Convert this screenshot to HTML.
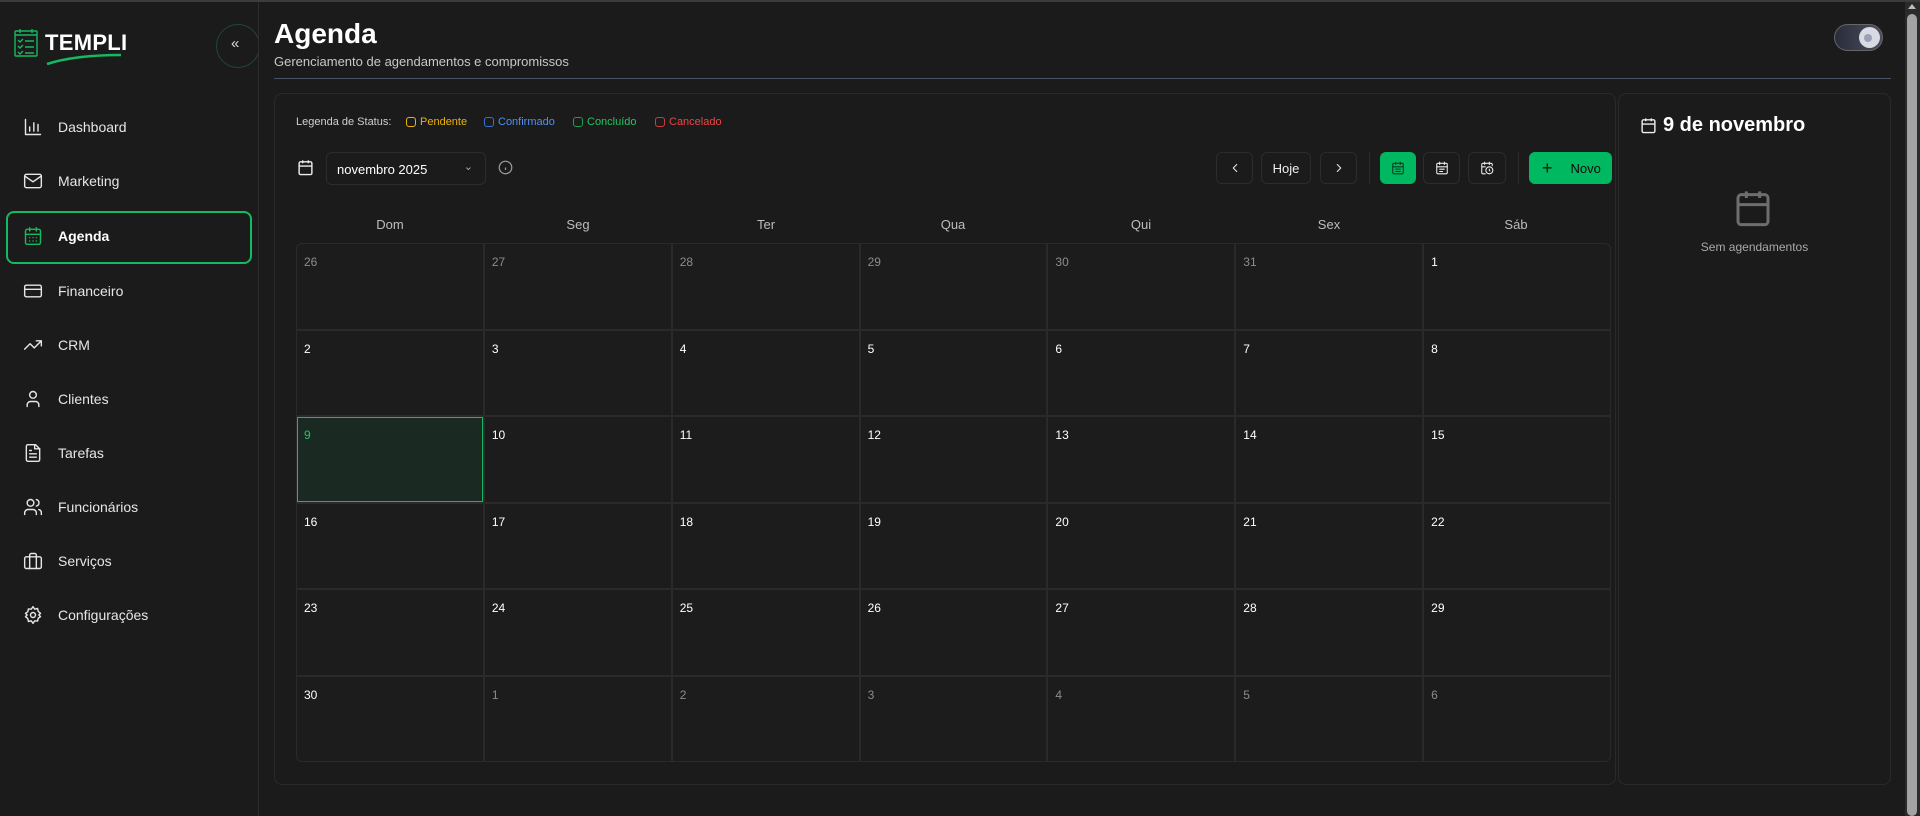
<!DOCTYPE html>
<html><head><meta charset="utf-8"><style>
*{box-sizing:border-box;margin:0;padding:0}
body{width:1920px;height:816px;background:#1b1b1b;font-family:"Liberation Sans",sans-serif;color:#e8e8e8;position:relative;overflow:hidden}
.abs{position:absolute}
.topbar{left:0;top:0;width:1920px;height:2px;background:#3c3c3c}
.side{left:0;top:2px;width:259px;height:814px;border-right:1px solid #2c2c2c;background:#1b1b1b;overflow:hidden}
.nav{position:absolute;left:23px;height:20px;display:flex;align-items:center;font-size:14px;color:#e6e6e6}
.nav svg{width:20px;height:20px;margin-right:15px;fill:none;stroke:#e6e6e6;stroke-width:1.7;stroke-linecap:round;stroke-linejoin:round}
.card{border:1px solid #2a2a2a;border-radius:8px}
.btn{position:absolute;top:152px;height:32px;border:1px solid #2c2c2c;border-radius:6px;display:flex;align-items:center;justify-content:center;font-size:13px;color:#eee;background:#1b1b1b}
.btn svg{width:14px;height:14px;fill:none;stroke:#eee;stroke-width:1.8;stroke-linecap:round;stroke-linejoin:round}
.wd{position:absolute;top:217px;width:188px;text-align:center;font-size:13px;color:#bdbdbd}
.leg{position:absolute;top:116px;display:inline-flex;align-items:center;font-size:11px}
.leg i{display:inline-block;width:10px;height:10px;border:1.5px solid;border-radius:3px;margin-right:4px}
.c{background:#1c1c1c;font-size:12px;padding:11px 0 0 7px;color:#fff}.c.o{color:#8c8c8c}.c.t{background:#1a2a22;outline:1px solid #17b862;outline-offset:-1px;color:#22c55e}
</style></head><body>
<div class="abs topbar"></div>
<div class="abs side">
  <svg class="abs" style="left:14px;top:26px" width="26" height="30" viewBox="0 0 26 30" fill="none" stroke="#17b862" stroke-width="1.4"><rect x="1" y="3" width="22" height="25" rx="1"/><path d="M1 7h22M6 1v4M18 1v4M4 12l2 2 3-3M11 13h9M4 18l2 2 3-3M11 19h9M4 24l2 2 3-3M11 25h9"/></svg>
  <div class="abs" style="left:45px;top:28px;font-size:22px;font-weight:bold;color:#fff;letter-spacing:0.3px">TEMPLI</div>
  <svg class="abs" style="left:45px;top:50px" width="78" height="14"><path d="M2 12 Q30 3 76 3" stroke="#17b862" stroke-width="2.5" fill="none"/></svg>
  <div class="abs" style="left:216px;top:22px;width:44px;height:44px;border:1px solid #1f4a32;border-radius:50%"></div>
  <div class="abs" style="left:231px;top:33px;font-size:15px;color:#ddd">«</div>
  <div class="abs" style="left:6px;top:209px;width:246px;height:53px;border:2px solid #17b862;border-radius:8px"></div>
  <div class="nav" style="top:115px"><svg viewBox="0 0 24 24"><path d="M3 3v18h18M8 17v-5M13 17V7M18 17v-8"/></svg>Dashboard</div>
  <div class="nav" style="top:169px"><svg viewBox="0 0 24 24"><rect x="2" y="4" width="20" height="16" rx="2"/><path d="M2 6l10 7 10-7"/></svg>Marketing</div>
  <div class="nav" style="top:224px;font-weight:bold;color:#fff"><svg viewBox="0 0 24 24" style="stroke:#17b862"><rect x="3" y="4" width="18" height="18" rx="2"/><path d="M3 10h18M8 2v4M16 2v4M8 14h.01M12 14h.01M16 14h.01M8 18h.01M12 18h.01M16 18h.01"/></svg>Agenda</div>
  <div class="nav" style="top:279px"><svg viewBox="0 0 24 24"><rect x="2" y="5" width="20" height="14" rx="2"/><path d="M2 10h20"/></svg>Financeiro</div>
  <div class="nav" style="top:333px"><svg viewBox="0 0 24 24"><path d="M22 7l-8.5 8.5-5-5L2 17M16 7h6v6"/></svg>CRM</div>
  <div class="nav" style="top:387px"><svg viewBox="0 0 24 24"><circle cx="12" cy="7" r="4"/><path d="M19 21v-2a4 4 0 0 0-4-4H9a4 4 0 0 0-4 4v2"/></svg>Clientes</div>
  <div class="nav" style="top:441px"><svg viewBox="0 0 24 24"><path d="M15 2H6a2 2 0 0 0-2 2v16a2 2 0 0 0 2 2h12a2 2 0 0 0 2-2V7z"/><path d="M14 2v5h6M8 13h8M8 17h8M8 9h2"/></svg>Tarefas</div>
  <div class="nav" style="top:495px"><svg viewBox="0 0 24 24"><circle cx="9" cy="7" r="4"/><path d="M16 21v-2a4 4 0 0 0-4-4H6a4 4 0 0 0-4 4v2M16 3.1a4 4 0 0 1 0 7.8M22 21v-2a4 4 0 0 0-3-3.9"/></svg>Funcionários</div>
  <div class="nav" style="top:549px"><svg viewBox="0 0 24 24"><rect x="2" y="7" width="20" height="14" rx="2"/><path d="M16 21V5a2 2 0 0 0-2-2h-4a2 2 0 0 0-2 2v16"/></svg>Serviços</div>
  <div class="nav" style="top:603px"><svg viewBox="0 0 24 24"><circle cx="12" cy="12" r="3"/><path d="M12 2l2 3 3.5-.8.8 3.5L21 10l-2 2 2 2-2.7 1.8-.8 3.5L14 19l-2 3-2-3-3.5.8-.8-3.5L3 14l2-2-2-2 2.7-1.8.8-3.5L10 5z"/></svg>Configurações</div>
</div>

<div class="abs" style="left:274px;top:18px;font-size:28px;font-weight:bold;color:#fff">Agenda</div>
<div class="abs" style="left:274px;top:54px;font-size:13px;color:#c8c8c8">Gerenciamento de agendamentos e compromissos</div>
<div class="abs" style="left:274px;top:78px;width:1617px;height:1px;background:#4a5265"></div>
<div class="abs" style="left:1834px;top:24px;width:49px;height:27px;border-radius:14px;background:linear-gradient(90deg,#2a2d3a,#4a4e5e);border:1px solid #666"></div>
<div class="abs" style="left:1859px;top:27px;width:21px;height:21px;border-radius:50%;background:#d8dbe3"></div>
<div class="abs" style="left:1864px;top:34px;width:8px;height:8px;border-radius:50%;background:#9aa0b5"></div>

<div class="abs card" style="left:274px;top:93px;width:1342px;height:692px"></div>
<div class="abs card" style="left:1618px;top:93px;width:273px;height:692px"></div>

<div class="leg" style="left:296px;color:#cfcfcf">Legenda de Status:</div>
<div class="leg" style="left:406px;color:#eab308"><i></i>Pendente</div>
<div class="leg" style="left:484px;color:#4f8ff7"><i style="border-color:#3b6fd0"></i>Confirmado</div>
<div class="leg" style="left:573px;color:#22c55e"><i style="border-color:#1f9d4e"></i>Concluído</div>
<div class="leg" style="left:655px;color:#ef4444"><i style="border-color:#d03a3a"></i>Cancelado</div>

<svg class="abs" style="left:297px;top:159px" width="17" height="17" viewBox="0 0 24 24" fill="none" stroke="#eee" stroke-width="2"><rect x="3" y="4" width="18" height="18" rx="2"/><path d="M3 10h18M8 2v4M16 2v4"/></svg>
<div class="abs" style="left:326px;top:152px;width:160px;height:33px;border:1px solid #2c2c2c;border-radius:6px;font-size:13px;padding:9px 0 0 10px;color:#fff">novembro 2025<span style="position:absolute;right:12px;top:7px;color:#aaa;font-size:11px">⌄</span></div>
<svg class="abs" style="left:498px;top:160px" width="15" height="15" viewBox="0 0 24 24" fill="none" stroke="#999" stroke-width="2"><circle cx="12" cy="12" r="10"/><path d="M12 16v-4M12 8h.01"/></svg>

<div class="btn" style="left:1216px;width:37px"><svg viewBox="0 0 24 24"><path d="M15 18l-6-6 6-6"/></svg></div>
<div class="btn" style="left:1261px;width:50px">Hoje</div>
<div class="btn" style="left:1320px;width:37px"><svg viewBox="0 0 24 24"><path d="M9 18l6-6-6-6"/></svg></div>
<div class="abs" style="left:1369px;top:152px;width:1px;height:32px;background:#2c2c2c"></div>
<div class="btn" style="left:1380px;width:36px;background:#00b85f;border-color:#00b85f"><svg viewBox="0 0 24 24" style="stroke:#0b3b22"><rect x="3" y="4" width="18" height="18" rx="2"/><path d="M3 10h18M8 2v4M16 2v4M8 14h8M8 18h8"/></svg></div>
<div class="btn" style="left:1423px;width:37px"><svg viewBox="0 0 24 24"><rect x="3" y="4" width="18" height="18" rx="2"/><path d="M3 10h18M8 2v4M16 2v4M8 14h8M8 18h5"/></svg></div>
<div class="btn" style="left:1468px;width:38px"><svg viewBox="0 0 24 24"><path d="M21 8V6a2 2 0 0 0-2-2H5a2 2 0 0 0-2 2v14a2 2 0 0 0 2 2h4M3 10h6M8 2v4M16 2v4"/><circle cx="16" cy="16" r="6"/><path d="M16 14v2l1 1"/></svg></div>
<div class="abs" style="left:1518px;top:152px;width:1px;height:32px;background:#2c2c2c"></div>
<div class="btn" style="left:1529px;width:83px;background:#00b85f;border-color:#00b85f;justify-content:flex-start;padding-left:12px"><span style="font-size:18px;color:#0a1a10;margin-right:18px">+</span><span style="color:#0a0a0a">Novo</span></div>

<div class="wd" style="left:296px">Dom</div><div class="wd" style="left:484px">Seg</div><div class="wd" style="left:672px">Ter</div><div class="wd" style="left:859px">Qua</div><div class="wd" style="left:1047px">Qui</div><div class="wd" style="left:1235px">Sex</div><div class="wd" style="left:1422px">Sáb</div>

<div class="abs" style="left:296px;top:243px;width:1315px;height:519px;background:#2a2a2a;border:1px solid #2a2a2a;border-radius:6px;overflow:hidden">
<div style="display:grid;grid-template-columns:repeat(7,1fr);grid-template-rows:repeat(6,1fr);gap:2px;width:100%;height:100%">
<div class="c o">26</div><div class="c o">27</div><div class="c o">28</div><div class="c o">29</div><div class="c o">30</div><div class="c o">31</div><div class="c">1</div>
<div class="c">2</div><div class="c">3</div><div class="c">4</div><div class="c">5</div><div class="c">6</div><div class="c">7</div><div class="c">8</div>
<div class="c t">9</div><div class="c">10</div><div class="c">11</div><div class="c">12</div><div class="c">13</div><div class="c">14</div><div class="c">15</div>
<div class="c">16</div><div class="c">17</div><div class="c">18</div><div class="c">19</div><div class="c">20</div><div class="c">21</div><div class="c">22</div>
<div class="c">23</div><div class="c">24</div><div class="c">25</div><div class="c">26</div><div class="c">27</div><div class="c">28</div><div class="c">29</div>
<div class="c">30</div><div class="c o">1</div><div class="c o">2</div><div class="c o">3</div><div class="c o">4</div><div class="c o">5</div><div class="c o">6</div>
</div></div>

<svg class="abs" style="left:1640px;top:117px" width="17" height="17" viewBox="0 0 24 24" fill="none" stroke="#eee" stroke-width="2"><rect x="3" y="4" width="18" height="18" rx="2"/><path d="M3 10h18M8 2v4M16 2v4"/></svg>
<div class="abs" style="left:1663px;top:114px;font-size:20px;font-weight:bold;color:#fff">9 de novembro</div>
<svg class="abs" style="left:1733px;top:188px" width="40" height="40" viewBox="0 0 24 24" fill="none" stroke="#6e6e6e" stroke-width="1.8"><rect x="3" y="4" width="18" height="18" rx="2"/><path d="M3 10h18M8 2v4M16 2v4"/></svg>
<div class="abs" style="left:1618px;top:240px;width:273px;text-align:center;font-size:12px;color:#a8a8a8">Sem agendamentos</div>

<div class="abs" style="left:1905px;top:2px;width:15px;height:814px;background:#2b2b2b"></div>
<div class="abs" style="left:1907px;top:14px;width:10px;height:802px;background:#a3a3a3;border-radius:5px"></div>
<div class="abs" style="left:1908px;top:4px;width:0;height:0;border-left:4px solid transparent;border-right:4px solid transparent;border-bottom:5px solid #bbb"></div>
</body></html>
